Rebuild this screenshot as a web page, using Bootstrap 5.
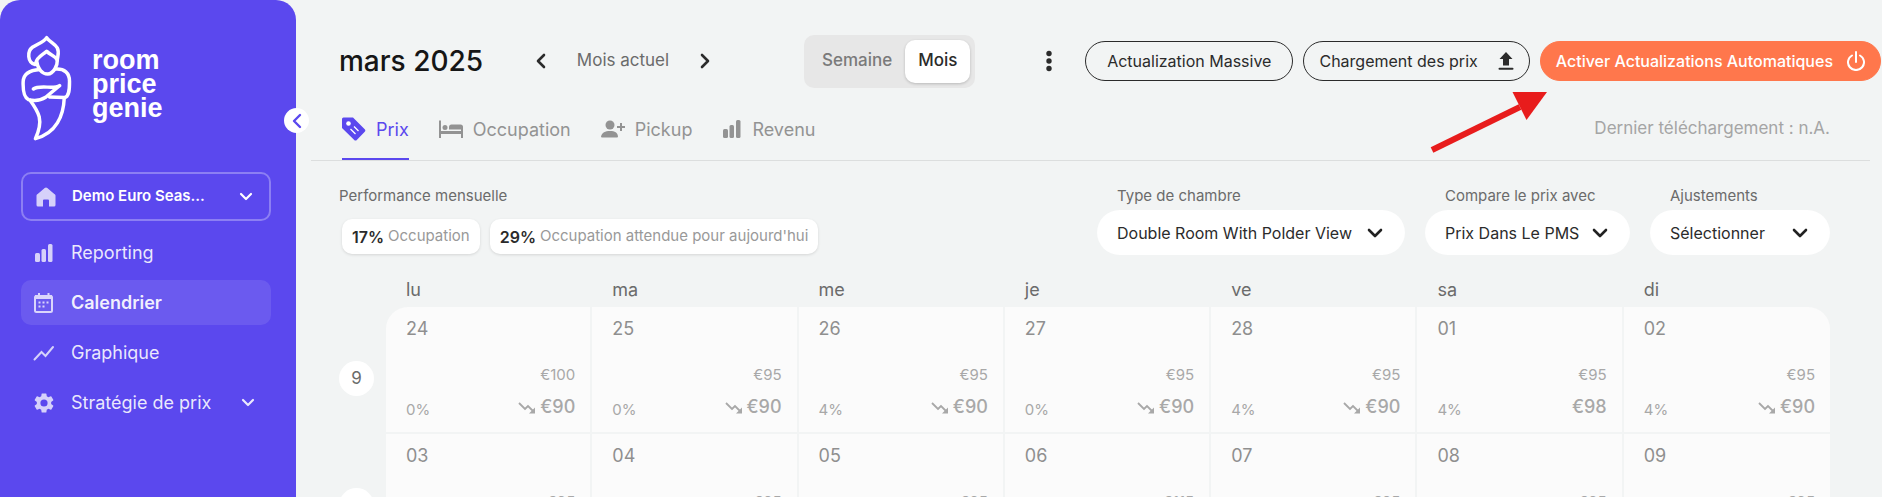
<!DOCTYPE html>
<html lang="fr">
<head>
<meta charset="utf-8">
<meta name="viewport" content="width=device-width, initial-scale=1">
<title>RoomPriceGenie – Calendrier</title>
<link href="https://cdn.jsdelivr.net/npm/bootstrap@5.3.0/dist/css/bootstrap.min.css" rel="stylesheet">
<style>
:root{--brand:#5b48ee;--page:#f2f4f4;--ink:#2b2b2b;--mid:#6b6b6b;--soft:#999}
body{font-family:Inter,"Liberation Sans",sans-serif;background:var(--page);color:var(--ink)}
.app{height:100vh;overflow:hidden}
.side{width:296px;flex:none;background:var(--brand);border-radius:20px 20px 0 0;padding:35px 25px 0 21px;position:relative;z-index:1}
.brand-name{font:700 27px/24px "Liberation Sans",sans-serif;color:#fff;margin:13px 0 0 19px}
.collapse-btn{position:absolute;right:-13px;top:108px;width:25px;height:25px;border-radius:50%;background:#fff;border:0;color:var(--brand)}
.hotel{height:49px;border:2px solid rgba(255,255,255,.3);border-radius:10px;background:none;color:#fff;font-size:15px;font-weight:600;padding:0 16px 0 13px;margin-top:31px}
.side-nav{gap:5px;margin-top:9px}
.side-item{height:45px;border-radius:10px;color:rgba(255,255,255,.88);font-size:18px;text-decoration:none;padding:0 16px 0 12px}
.side-item.active{background:rgba(255,255,255,.1);font-weight:600;color:rgba(255,255,255,.92)}
.side-item svg,.hotel svg{flex:none}
.dim{opacity:.75}
.top{height:52px;margin:35px 1px 1px 43px}
.title{font-size:28px;font-weight:500;line-height:36px;color:#161616;margin:0;width:192px;white-space:nowrap}
.plain{border:0;background:none;padding:0;color:var(--ink);display:flex}
.now{font-size:17px;color:var(--mid);width:136px;justify-content:center}
.toggle{background:#e7e7e7;border-radius:10px;padding:5px;height:53px;margin-left:89px}
.toggle button{border:0;background:none;font-size:17px;font-weight:500;color:#7a7a7a;border-radius:10px;padding:0 13px;height:43px}
.toggle button.on{background:#fff;color:var(--ink);box-shadow:0 1px 3px rgba(0,0,0,.2)}
.actions{gap:10px}
.pill{height:40px;border-radius:20px;border:1px solid var(--ink);background:none;font-size:16px;color:var(--ink);padding:0 15px;white-space:nowrap;display:flex;align-items:center;justify-content:space-between;gap:20px}
.pill-text{padding:0 21px}
.pill-hot{background:#ff774c;border-color:#ff774c;color:#fff;font-weight:500;gap:14px}
.pointer{position:absolute;left:-110px;top:50px;pointer-events:none}
.tabs{margin:0 12px 0 15px;padding:0 40px 0 31px;height:73px;border-bottom:1px solid #dcdede;gap:30px}
.tabs a{color:#939393;text-decoration:none;font-size:18px;height:60px;display:flex;align-items:center;gap:10px;border-bottom:2px solid transparent;margin-top:12px}
.tabs a.on{color:var(--brand);border-color:var(--brand)}
.last{font-size:17px;color:#a5a5a5;margin-top:10px}
.zone{margin:0 52px 0 43px}
.filters{padding-top:25px}
.cap{font-size:15px;line-height:20px;color:var(--mid);display:block}
label.cap{padding-left:20px}
.chips{gap:10px;margin:13px 0 0 3px}
.chip{height:35px;background:#fff;border-radius:10px;box-shadow:0 1px 3px rgba(0,0,0,.12);font-size:15px;color:var(--soft);padding:0 10px;display:flex;align-items:center;gap:4px;white-space:nowrap}
.chip b{font-size:16px;font-weight:600;color:var(--ink)}
.pickers{gap:20px}
.pick{width:auto;height:45px;border:0;border-radius:23px;font-size:16px;line-height:24px;color:var(--ink);background-color:#fff;padding:0 50px 0 20px;background-size:20px 20px;background-position:right 20px center;background-image:url("data:image/svg+xml,%3Csvg xmlns='http://www.w3.org/2000/svg' viewBox='0 0 20 20'%3E%3Cpath d='M4 7l6 6 6-6' fill='none' stroke='%23222' stroke-width='2.6' stroke-linecap='round' stroke-linejoin='round'/%3E%3C/svg%3E")}
.pick-md{min-width:180px}
.pick-lg{min-width:308px}
.cal{width:100%;table-layout:fixed;border-collapse:separate;border-spacing:0;margin-top:17px}
.cal .wk{width:47px}
.cal thead th{height:35px;font-size:18px;font-weight:400;color:var(--mid);padding:0 0 0 20px;line-height:35px}
.cal tbody th{padding:54px 0 0;vertical-align:top;font-weight:400}
.wk-no{width:35px;height:35px;border-radius:50%;background:#fff;font-size:17px;color:var(--mid)}
.cal td{height:127px;background:#fbfbfb;border:0 solid var(--page);border-width:0 2px 2px 0;padding:10px 15px 0 20px;vertical-align:top;color:#a8a8a8}
.cal td:last-child{border-right-width:0}
.cal tbody tr:first-child td:nth-child(2){border-top-left-radius:22px}
.cal tbody tr:first-child td:last-child{border-top-right-radius:22px}
.day{font-size:18px;line-height:24px;color:#8f8f8f}
.was{font-size:15px;line-height:20px;margin-top:24px;text-align:right}
.foot{margin-top:10px;height:24px}
.occ{font-size:15px;line-height:20px;padding-top:5px}
.rate{font-size:18px;line-height:24px;font-weight:500}
</style>
</head>
<body>
<svg width="0" height="0" class="position-absolute" aria-hidden="true">
<symbol id="down" viewBox="0 0 18 14"><path d="M1 2l6 6 3-3 5 5" fill="none" stroke="currentColor" stroke-width="1.800"/><path d="M17 6.500v6h-6z" fill="currentColor"/></symbol>
<symbol id="bars" viewBox="0 0 18 18"><rect x="0" y="9" width="5" height="9" rx="1.500"/><rect x="6.500" y="5" width="4.500" height="13" rx="1.500"/><rect x="13" y="0" width="4.500" height="18" rx="1.500"/></symbol>
<symbol id="chev" viewBox="0 0 14 10"><path d="M2 2l5 5 5-5" fill="none" stroke="currentColor" stroke-width="2.200" stroke-linecap="round" stroke-linejoin="round"/></symbol>
</svg>
<div class="app d-flex">
<aside class="side">
  <div class="d-flex align-items-start">
    <svg width="52" height="106" viewBox="62 105 156 320" fill="none" stroke="#fff" stroke-width="10.500" stroke-linejoin="round" stroke-linecap="round" role="img" aria-label="Logo"><path d="M104 194C80 188 80 154 96 142C113 131 129 127 139 113C149 127 164 132 171 144C178 157 172 168 171 181"/><path d="M106 190C110 170 127 166 139 154C150 166 168 168 171 182C172 197 160 222 142 223C124 223 111 205 109 184"/><path d="M118 209C88 211 69 221 68 246C67 275 70 294 84 300C100 304 122 302 136 293L178 258C160 270 118 254 99 268"/><path d="M165 208C193 206 208 220 208 245C208 270 207 292 192 294L147 292"/><path d="M89 302C115 338 131 362 105 418C168 402 190 348 192 296"/></svg>
    <div class="brand-name">room<br>price<br>genie</div>
  </div>
  <button class="collapse-btn p-0 d-flex align-items-center justify-content-center" aria-label="Réduire le menu"><svg width="12" height="16" viewBox="0 0 12 16"><path d="M9 2L3 8l6 6" fill="none" stroke="currentColor" stroke-width="2.400" stroke-linecap="round" stroke-linejoin="round"/></svg></button>
  <button class="hotel w-100 d-flex align-items-center"><svg class="me-3 dim" width="20" height="20" viewBox="0 0 20 20" fill="#fff"><path d="M10 0.500a2 2 0 0 1 1.300.5l7 6A2 2 0 0 1 19.500 8.500V18a1.500 1.500 0 0 1-1.500 1.500H13V13.500a1 1 0 0 0-1-1H8a1 1 0 0 0-1 1v6H2A1.500 1.500 0 0 1 .5 18V8.500A2 2 0 0 1 1.700 7l7-6A2 2 0 0 1 10 .5z"/></svg><span class="flex-grow-1 text-start">Demo Euro Seas...</span><svg width="14" height="10"><use href="#chev"/></svg></button>
  <nav class="side-nav d-flex flex-column">
    <a href="#" class="side-item d-flex align-items-center"><svg class="dim me-3" width="22" height="18" viewBox="-2 0 22 18" fill="#fff"><use href="#bars" width="18" height="18"/></svg><span>Reporting</span></a>
    <a href="#" class="side-item active d-flex align-items-center"><svg class="dim me-3" width="22" height="20" viewBox="-1 0 22 20"><rect x="1" y="3" width="17" height="16" rx="1.500" fill="none" stroke="#fff" stroke-width="2"/><path d="M1 2h17v4H1zM4 0h2v3H4zM13.500 0h2v3h-2z" fill="#fff"/><path d="M4.500 9.500h2M8.500 9.500h2M12.500 9.500h2M4.500 13.500h2M8.500 13.500h2" stroke="#fff" stroke-width="2"/></svg><span>Calendrier</span></a>
    <a href="#" class="side-item d-flex align-items-center"><svg class="dim me-3" width="22" height="16" viewBox="0 0 22 16"><path d="M1.500 14.500L8.500 7l4 4L20 2" fill="none" stroke="#fff" stroke-width="2" stroke-linecap="round"/></svg><span>Graphique</span></a>
    <a href="#" class="side-item d-flex align-items-center"><svg class="dim me-3" width="22" height="22" viewBox="1 1 22 22" fill="#fff"><path d="M19.140 12.940c.04-.3.060-.61.060-.94s-.02-.64-.07-.94l2.030-1.580a.49.490 0 0 0 .12-.61l-1.920-3.320a.49.490 0 0 0-.59-.22l-2.390.96c-.5-.38-1.030-.7-1.620-.94L14.400 2.810a.48.480 0 0 0-.48-.41h-3.840a.47.470 0 0 0-.47.410L9.250 5.350c-.59.240-1.130.57-1.620.94l-2.390-.96a.48.480 0 0 0-.59.220L2.740 8.870a.47.470 0 0 0 .12.610l2.030 1.580c-.05.300-.09.630-.09.940s.02.640.07.940l-2.030 1.580a.49.490 0 0 0-.12.610l1.920 3.320c.12.220.37.290.59.220l2.390-.96c.5.380 1.030.7 1.620.94l.36 2.540c.05.240.24.410.48.410h3.840c.24 0 .44-.17.470-.41l.36-2.540c.59-.24 1.130-.56 1.620-.94l2.390.96c.22.080.47 0 .59-.22l1.920-3.320a.47.470 0 0 0-.12-.61zM12 15.600A3.600 3.600 0 1 1 12 8.400a3.600 3.600 0 0 1 0 7.200z"/></svg><span class="flex-grow-1">Stratégie de prix</span><svg width="14" height="10"><use href="#chev"/></svg></a>
  </nav>
</aside>
<main class="flex-grow-1">
  <header class="top d-flex align-items-center">
    <h1 class="title">mars 2025</h1>
    <button class="plain" aria-label="Mois précédent"><svg width="20" height="20" viewBox="0 0 20 20"><path d="M13 4l-6 6 6 6" fill="none" stroke="currentColor" stroke-width="2.600" stroke-linecap="round" stroke-linejoin="round"/></svg></button>
    <button class="plain now mx-1">Mois actuel</button>
    <button class="plain" aria-label="Mois suivant"><svg width="20" height="20" viewBox="0 0 20 20"><path d="M7 4l6 6-6 6" fill="none" stroke="currentColor" stroke-width="2.600" stroke-linecap="round" stroke-linejoin="round"/></svg></button>
    <div class="toggle d-flex" role="group"><button>Semaine</button><button class="on">Mois</button></div>
    <div class="actions ms-auto d-flex align-items-center">
      <button class="plain me-3" aria-label="Plus d'options"><svg width="20" height="22" viewBox="0 0 20 22" fill="currentColor"><circle cx="10" cy="3.500" r="2.700"/><circle cx="10" cy="11" r="2.700"/><circle cx="10" cy="18.500" r="2.700"/></svg></button>
      <button class="pill pill-text">Actualization Massive</button>
      <button class="pill">Chargement des prix<svg width="16" height="18" viewBox="0 0 16 18" fill="currentColor"><path d="M8 0l6.500 7H11v6.500H5V7H1.500z"/><rect x="0.500" y="15.700" width="15" height="2.100" rx="1"/></svg></button>
      <div class="position-relative">
        <button class="pill pill-hot">Activer Actualizations Automatiques<svg width="18" height="20" viewBox="0 0 18 20"><path d="M5 4.500A8 7.800 0 1 0 13 4.500M9 1v10" fill="none" stroke="currentColor" stroke-width="2" stroke-linecap="round"/></svg></button>
        <svg class="pointer" width="120" height="62" viewBox="0 0 120 62"><path d="M2 59L90 16" stroke="#e81c1c" stroke-width="6"/><path d="M82.500 1H117L96.500 29z" fill="#e81c1c"/></svg>
      </div>
    </div>
  </header>
  <div class="tabs d-flex align-items-start">
    <a href="#" class="on"><svg width="24" height="24" viewBox="0 0 24 24"><path d="M0 2a1.500 1.500 0 0 1 1.500-1.500H11L22.500 12a2 2 0 0 1 0 3L15 22.700a2 2 0 0 1-3 0L0 11z" fill="currentColor"/><circle cx="6.500" cy="6.500" r="2.300" fill="#fff"/><path d="M8.500 12l5 5M12 9.500l4.500 4.500" stroke="#fff" stroke-width="1.300"/></svg>Prix</a>
    <a href="#"><svg width="24" height="20" viewBox="0 0 24 20" fill="currentColor"><path d="M0 1.500h2V12h20V8h2v11h-2v-4H2v4H0z"/><circle cx="6" cy="8.500" r="2.500"/><path d="M10 10.500V8a2.500 2.500 0 0 1 2.500-2.500h9A2.500 2.500 0 0 1 24 8v2.500z"/></svg>Occupation</a>
    <a href="#"><svg width="24" height="18" viewBox="0 0 24 18" fill="currentColor"><circle cx="9" cy="5" r="4.500"/><path d="M0 16.500C1 12.500 4 11 9 11s7.500 1.500 8 5.500a1 1 0 0 1-1 1H1a1 1 0 0 1-1-1z"/><path d="M19 3h2v3h3v2h-3v3h-2V8h-3V6h3z"/></svg>Pickup</a>
    <a href="#"><svg width="20" height="18" viewBox="-1 0 20 18" fill="currentColor"><use href="#bars" width="18" height="18"/></svg>Revenu</a>
    <span class="last ms-auto align-self-center">Dernier téléchargement : n.A.</span>
  </div>
  <section class="zone filters d-flex justify-content-between align-items-start">
    <div>
      <span class="cap">Performance mensuelle</span>
      <div class="chips d-flex"><div class="chip"><b>17%</b>Occupation</div><div class="chip"><b>29%</b>Occupation attendue pour aujourd'hui</div></div>
    </div>
    <form class="pickers d-flex">
      <div><label class="cap mb-1" for="room">Type de chambre</label><select id="room" class="form-select pick pick-lg"><option>Double Room With Polder View</option></select></div>
      <div><label class="cap mb-1" for="cmp">Compare le prix avec</label><select id="cmp" class="form-select pick"><option>Prix Dans Le PMS</option></select></div>
      <div><label class="cap mb-1" for="adj">Ajustements</label><select id="adj" class="form-select pick pick-md"><option>Sélectionner</option></select></div>
    </form>
  </section>
  <section class="zone">
    <table class="cal">
      <thead><tr><th class="wk"></th><th>lu</th><th>ma</th><th>me</th><th>je</th><th>ve</th><th>sa</th><th>di</th></tr></thead>
      <tbody id="weeks"></tbody>
    </table>
  </section>
</main>
</div>
<script>
const weeks = [
  {no: 9, days: [['24',100,0,90,1],['25',95,0,90,1],['26',95,4,90,1],['27',95,0,90,1],['28',95,4,90,1],['01',95,4,98,0],['02',95,4,90,1]]},
  {no: 10, days: [['03',95,0,90,1],['04',95,0,90,1],['05',95,4,90,1],['06',115,4,90,1],['07',95,4,90,1],['08',95,4,90,1],['09',95,4,90,1]]}
];
document.getElementById('weeks').innerHTML = weeks.map(w =>
  `<tr><th scope="row"><div class="wk-no d-flex align-items-center justify-content-center">${w.no}</div></th>` +
  w.days.map(([day, was, occ, rate, falling]) =>
    `<td><div class="day">${day}</div><div class="was">€${was}</div>
     <div class="foot d-flex justify-content-between"><span class="occ">${occ}%</span>
     <span class="rate">${falling ? '<svg width="18" height="14" class="me-1"><use href="#down"/></svg>' : ''}€${rate}</span></div></td>`).join('') +
  '</tr>').join('');
</script>
<script src="https://cdn.jsdelivr.net/npm/bootstrap@5.3.0/dist/js/bootstrap.bundle.min.js"></script>
</body>
</html>
